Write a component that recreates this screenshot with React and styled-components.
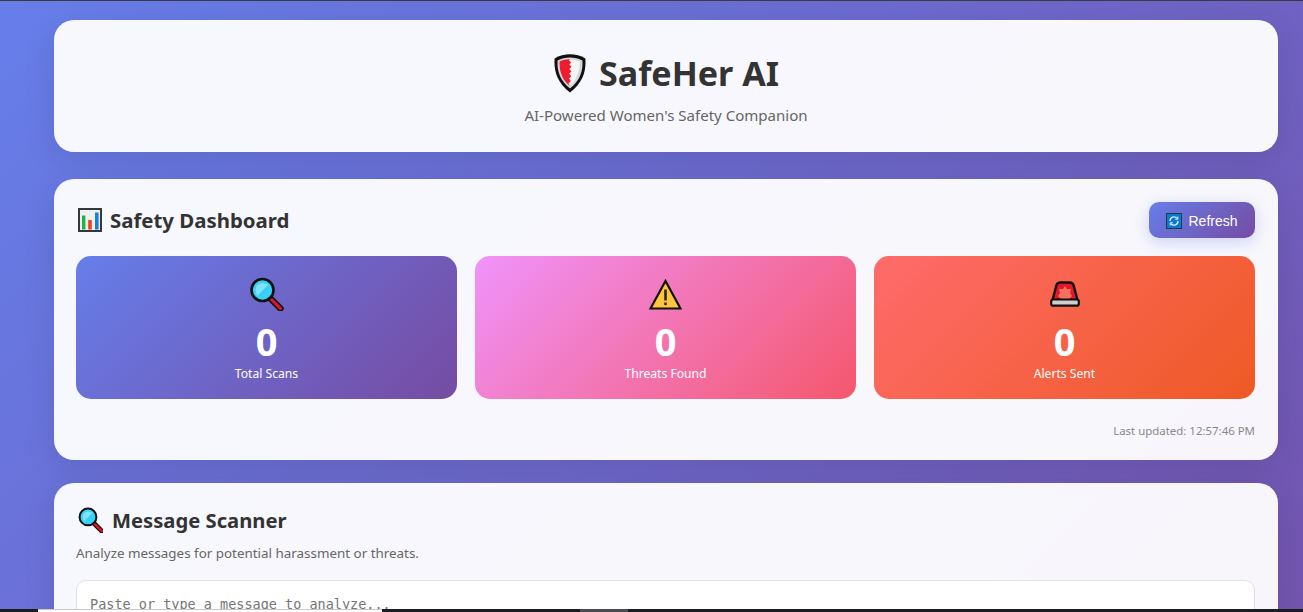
import styled, { createGlobalStyle } from "styled-components";

const GlobalStyle = createGlobalStyle`
  * {
    box-sizing: border-box;
  }

  html,
  body {
    margin: 0;
    height: 612px;
    overflow: hidden;
  }

  html {
    background: #6a63c0;
  }

  body {
    font-family: "Noto Sans", "Open Sans", sans-serif;
    background: linear-gradient(135deg, #667eea 0%, #764ba2 100%) no-repeat;
    background-size: 100% 1050px;
    color: #333;
  }
`;

const Page = styled.div`
  display: flex;
  flex-direction: column;
  height: 612px;
  padding: 20px 25px 0 54px;
  overflow: hidden;
`;

const Card = styled.section`
  flex-shrink: 0;
  background: rgba(255, 255, 255, 0.95);
  border-radius: 20px;
  box-shadow: 0 8px 32px rgba(0, 0, 0, 0.1);
`;

const HeaderCard = styled(Card)`
  height: 132px;
  margin-bottom: 27px;
  display: flex;
  flex-direction: column;
  align-items: center;
  padding-top: 30px;
`;

const Brand = styled.div`
  display: flex;
  align-items: center;
  gap: 13px;
  height: 46px;
`;

const BrandName = styled.h1`
  margin: 0;
  font-size: 34.1px;
  font-weight: 700;
  line-height: 46px;
  color: #333;
`;

const Tagline = styled.p`
  margin: 9px 0 0;
  font-size: 15.05px;
  line-height: 20px;
  color: #666;
`;

const DashboardCard = styled(Card)`
  height: 281px;
  margin-bottom: 23px;
  padding: 23px 23px 0 22px;
`;

const DashboardHead = styled.div`
  display: flex;
  align-items: center;
  justify-content: space-between;
  height: 36px;
  margin-bottom: 18px;
`;

const SectionTitle = styled.h2`
  display: flex;
  align-items: center;
  gap: ${(p) => p.$gap}px;
  margin: 0;
  font-size: ${(p) => p.$size}px;
  font-weight: 700;
  line-height: 28px;
  color: #333;
`;

const RefreshButton = styled.button`
  display: flex;
  align-items: center;
  justify-content: center;
  gap: 6px;
  width: 106px;
  height: 36px;
  padding: 1px 0 0;
  border: 0;
  border-radius: 10px;
  background: linear-gradient(135deg, #667eea 0%, #764ba2 100%);
  box-shadow: 0 4px 15px rgba(102, 126, 234, 0.3);
  color: #fff;
  font-family: "Liberation Sans", Arial, sans-serif;
  font-size: 14px;
`;

const StatsGrid = styled.div`
  display: grid;
  grid-template-columns: repeat(3, 1fr);
  gap: 18px;
`;

const StatCard = styled.div`
  display: flex;
  flex-direction: column;
  align-items: center;
  height: 143px;
  padding-top: 18px;
  border-radius: 15px;
  background: ${(p) => p.$bg};
  color: #fff;
`;

const StatIcon = styled.div`
  display: flex;
  align-items: center;
  justify-content: center;
  height: 40px;
`;

const StatValue = styled.div`
  margin-top: 4px;
  font-size: 38px;
  font-weight: 700;
  line-height: 46px;
`;

const StatLabel = styled.div`
  margin-top: 1px;
  font-size: 12.15px;
  line-height: 17px;
`;

const Updated = styled.div`
  margin-top: 24px;
  font-size: 11.45px;
  line-height: 16px;
  text-align: right;
  color: #888;
`;

const ScannerCard = styled(Card)`
  flex: 1 0 auto;
  padding: 23px 23px 0 22px;
`;

const ScannerHint = styled.p`
  margin: 10px 0 0;
  font-size: 13.4px;
  line-height: 18px;
  color: #666;
`;

const MessageBox = styled.textarea`
  display: block;
  width: 100%;
  height: 120px;
  margin-top: 18px;
  padding: 15px 13px;
  border: 1px solid #e1e1e8;
  border-radius: 10px;
  background: #fff;
  resize: none;
  outline: none;
  font-family: "DejaVu Sans Mono", monospace;
  font-size: 13.5px;
  line-height: 16px;

  &::placeholder {
    color: #757575;
    opacity: 1;
  }
`;

const TopEdge = styled.div`
  position: fixed;
  top: 0;
  left: 0;
  right: 0;
  height: 1px;
  background: #3a3a40;
`;

const Taskbar = styled.div`
  position: fixed;
  left: 0;
  right: 0;
  bottom: 0;
  height: 3px;
  display: flex;
  background: #1c1d22;
`;

const TaskbarTab = styled.div`
  width: 344px;
  margin-left: 38px;
  background: #fff;
  border-top: 1px solid #c8c8c8;
`;

const TaskbarThumb = styled.div`
  width: 48px;
  margin-left: 198px;
  background: #4c4c50;
`;

const ShieldIcon = () => (
  <svg width="33" height="40" viewBox="0 0 33 40">
    <path
      d="M17 1.2C12 1.2 6 2.4 1.6 5.4 .8 17 3.4 29.5 17 39.4 30.6 29.5 33.2 17 32.4 5.4 28 2.4 22 1.2 17 1.2Z"
      fill="#111"
    />
    <path
      d="M17 4.6C12.8 4.6 7.8 5.6 4.6 7.6 4 17 6.2 27.2 17 35.4 27.8 27.2 30 17 29.4 7.6 26.2 5.6 21.2 4.6 17 4.6Z"
      fill="#d6d6d8"
    />
    <path
      d="M17 6.6C20.6 6.6 24 7.2 26.8 8.8 27 15 25.6 23.6 19 31L17 32Z"
      fill="#f4f4f5"
    />
    <path
      d="M16.5 6.2C13.2 6.2 9.4 6.9 6.6 8.6 6.2 16.6 8.2 26 16.4 32.8L15.4 30.2 18 28 15.8 25.6 18.4 23.2 16 20.8 18.6 18.4 16.2 16 18.6 13.8 16.2 11.6 18.2 9.4 16.2 7.8Z"
      fill="#ed1c2e"
    />
  </svg>
);

const ChartIcon = () => (
  <svg width="26" height="24" viewBox="-2 0 26 24">
    <rect x="1" y="1" width="22" height="22" fill="#efefef" stroke="#34383c" strokeWidth="2" />
    <rect x="4" y="7.5" width="3.4" height="14" fill="#22b14c" />
    <rect x="10.2" y="12" width="3.6" height="9.5" fill="#f1401f" />
    <rect x="17" y="4.5" width="3.6" height="17" fill="#1482d8" />
  </svg>
);

const LensIcon = ({ width, height, viewBox }) => (
  <svg width={width} height={height} viewBox={viewBox}>
    <path d="M20.5 21 31 31.5" stroke="#111" strokeWidth="6.4" strokeLinecap="round" />
    <path d="M21.5 22 31 31.5" stroke="#e01626" strokeWidth="3" strokeLinecap="round" />
    <circle cx="13" cy="13" r="11" fill="#38d0f5" stroke="#111" strokeWidth="2.6" />
    <path d="M6 13A7 7 0 0 1 13 6L19 7.5 7.5 19Z" fill="#7de4fb" />
  </svg>
);

const WarningIcon = () => (
  <svg width="33" height="31" viewBox="0 0 33 31">
    <path d="M16.5 2 31.5 29.5H1.5Z" fill="#fdc63c" stroke="#111" strokeWidth="2.2" strokeLinejoin="miter" />
    <rect x="15.2" y="10.5" width="2.6" height="11" fill="#2a2a2a" />
    <rect x="15.2" y="23.5" width="2.6" height="2.6" fill="#2a2a2a" />
  </svg>
);

const SirenIcon = () => (
  <svg width="30" height="26" viewBox="0 0 30 26">
    <path
      d="M10 1.5H20C22 1.5 23 2.6 23.6 4.4L27.5 19H2.5L6.4 4.4C7 2.6 8 1.5 10 1.5Z"
      fill="#e3162c"
      stroke="#111"
      strokeWidth="2.4"
      strokeLinejoin="round"
    />
    <path d="M15 5 17 8 21 8 20 12 22 15 19 18H11L8 15 10 12 9 8 13 8Z" fill="#f2705c" />
    <rect x="1.2" y="18.5" width="27.6" height="6.2" rx="2" fill="#cfcfcf" stroke="#111" strokeWidth="2.2" />
  </svg>
);

const RefreshIcon = () => (
  <svg width="16" height="16" viewBox="0 0 16 16">
    <rect x="0.5" y="0.5" width="15" height="15" fill="#0a78d4" stroke="#2b3440" />
    <path d="M4 8A4 4 0 0 1 11 5.3M12 8A4 4 0 0 1 5 10.7" fill="none" stroke="#dcefff" strokeWidth="1.4" />
    <path d="M11.8 3.6V6.3H9.2M4.2 12.4V9.7H6.8" fill="none" stroke="#dcefff" strokeWidth="1" />
  </svg>
);

const stats = [
  {
    label: "Total Scans",
    icon: <LensIcon width={36} height={34} viewBox="-0.5 0 36 34" />,
    bg: "linear-gradient(135deg, #667eea 0%, #764ba2 100%)",
  },
  {
    label: "Threats Found",
    icon: <WarningIcon />,
    bg: "linear-gradient(135deg, #f093fb 0%, #f5576c 100%)",
  },
  {
    label: "Alerts Sent",
    icon: <SirenIcon />,
    bg: "linear-gradient(135deg, #ff6b6b 0%, #ee5a24 100%)",
  },
];

const App = () => {
  return (
    <>
      <GlobalStyle />
      <Page>
        <HeaderCard>
          <Brand>
            <ShieldIcon />
            <BrandName>SafeHer AI</BrandName>
          </Brand>
          <Tagline>AI-Powered Women's Safety Companion</Tagline>
        </HeaderCard>

        <DashboardCard>
          <DashboardHead>
            <SectionTitle $gap={8} $size={20.4}>
              <ChartIcon />
              Safety Dashboard
            </SectionTitle>
            <RefreshButton>
              <RefreshIcon />
              Refresh
            </RefreshButton>
          </DashboardHead>
          <StatsGrid>
            {stats.map((s) => (
              <StatCard key={s.label} $bg={s.bg}>
                <StatIcon>{s.icon}</StatIcon>
                <StatValue>0</StatValue>
                <StatLabel>{s.label}</StatLabel>
              </StatCard>
            ))}
          </StatsGrid>
          <Updated>Last updated: 12:57:46 PM</Updated>
        </DashboardCard>

        <ScannerCard>
          <SectionTitle $gap={9} $size={20.2}>
            <LensIcon width={27} height={26} viewBox="-2.5 0 35 34" />
            Message Scanner
          </SectionTitle>
          <ScannerHint>Analyze messages for potential harassment or threats.</ScannerHint>
          <MessageBox placeholder="Paste or type a message to analyze..." />
        </ScannerCard>
      </Page>
      <TopEdge />
      <Taskbar>
        <TaskbarTab />
        <TaskbarThumb />
      </Taskbar>
    </>
  );
};

export default App;
